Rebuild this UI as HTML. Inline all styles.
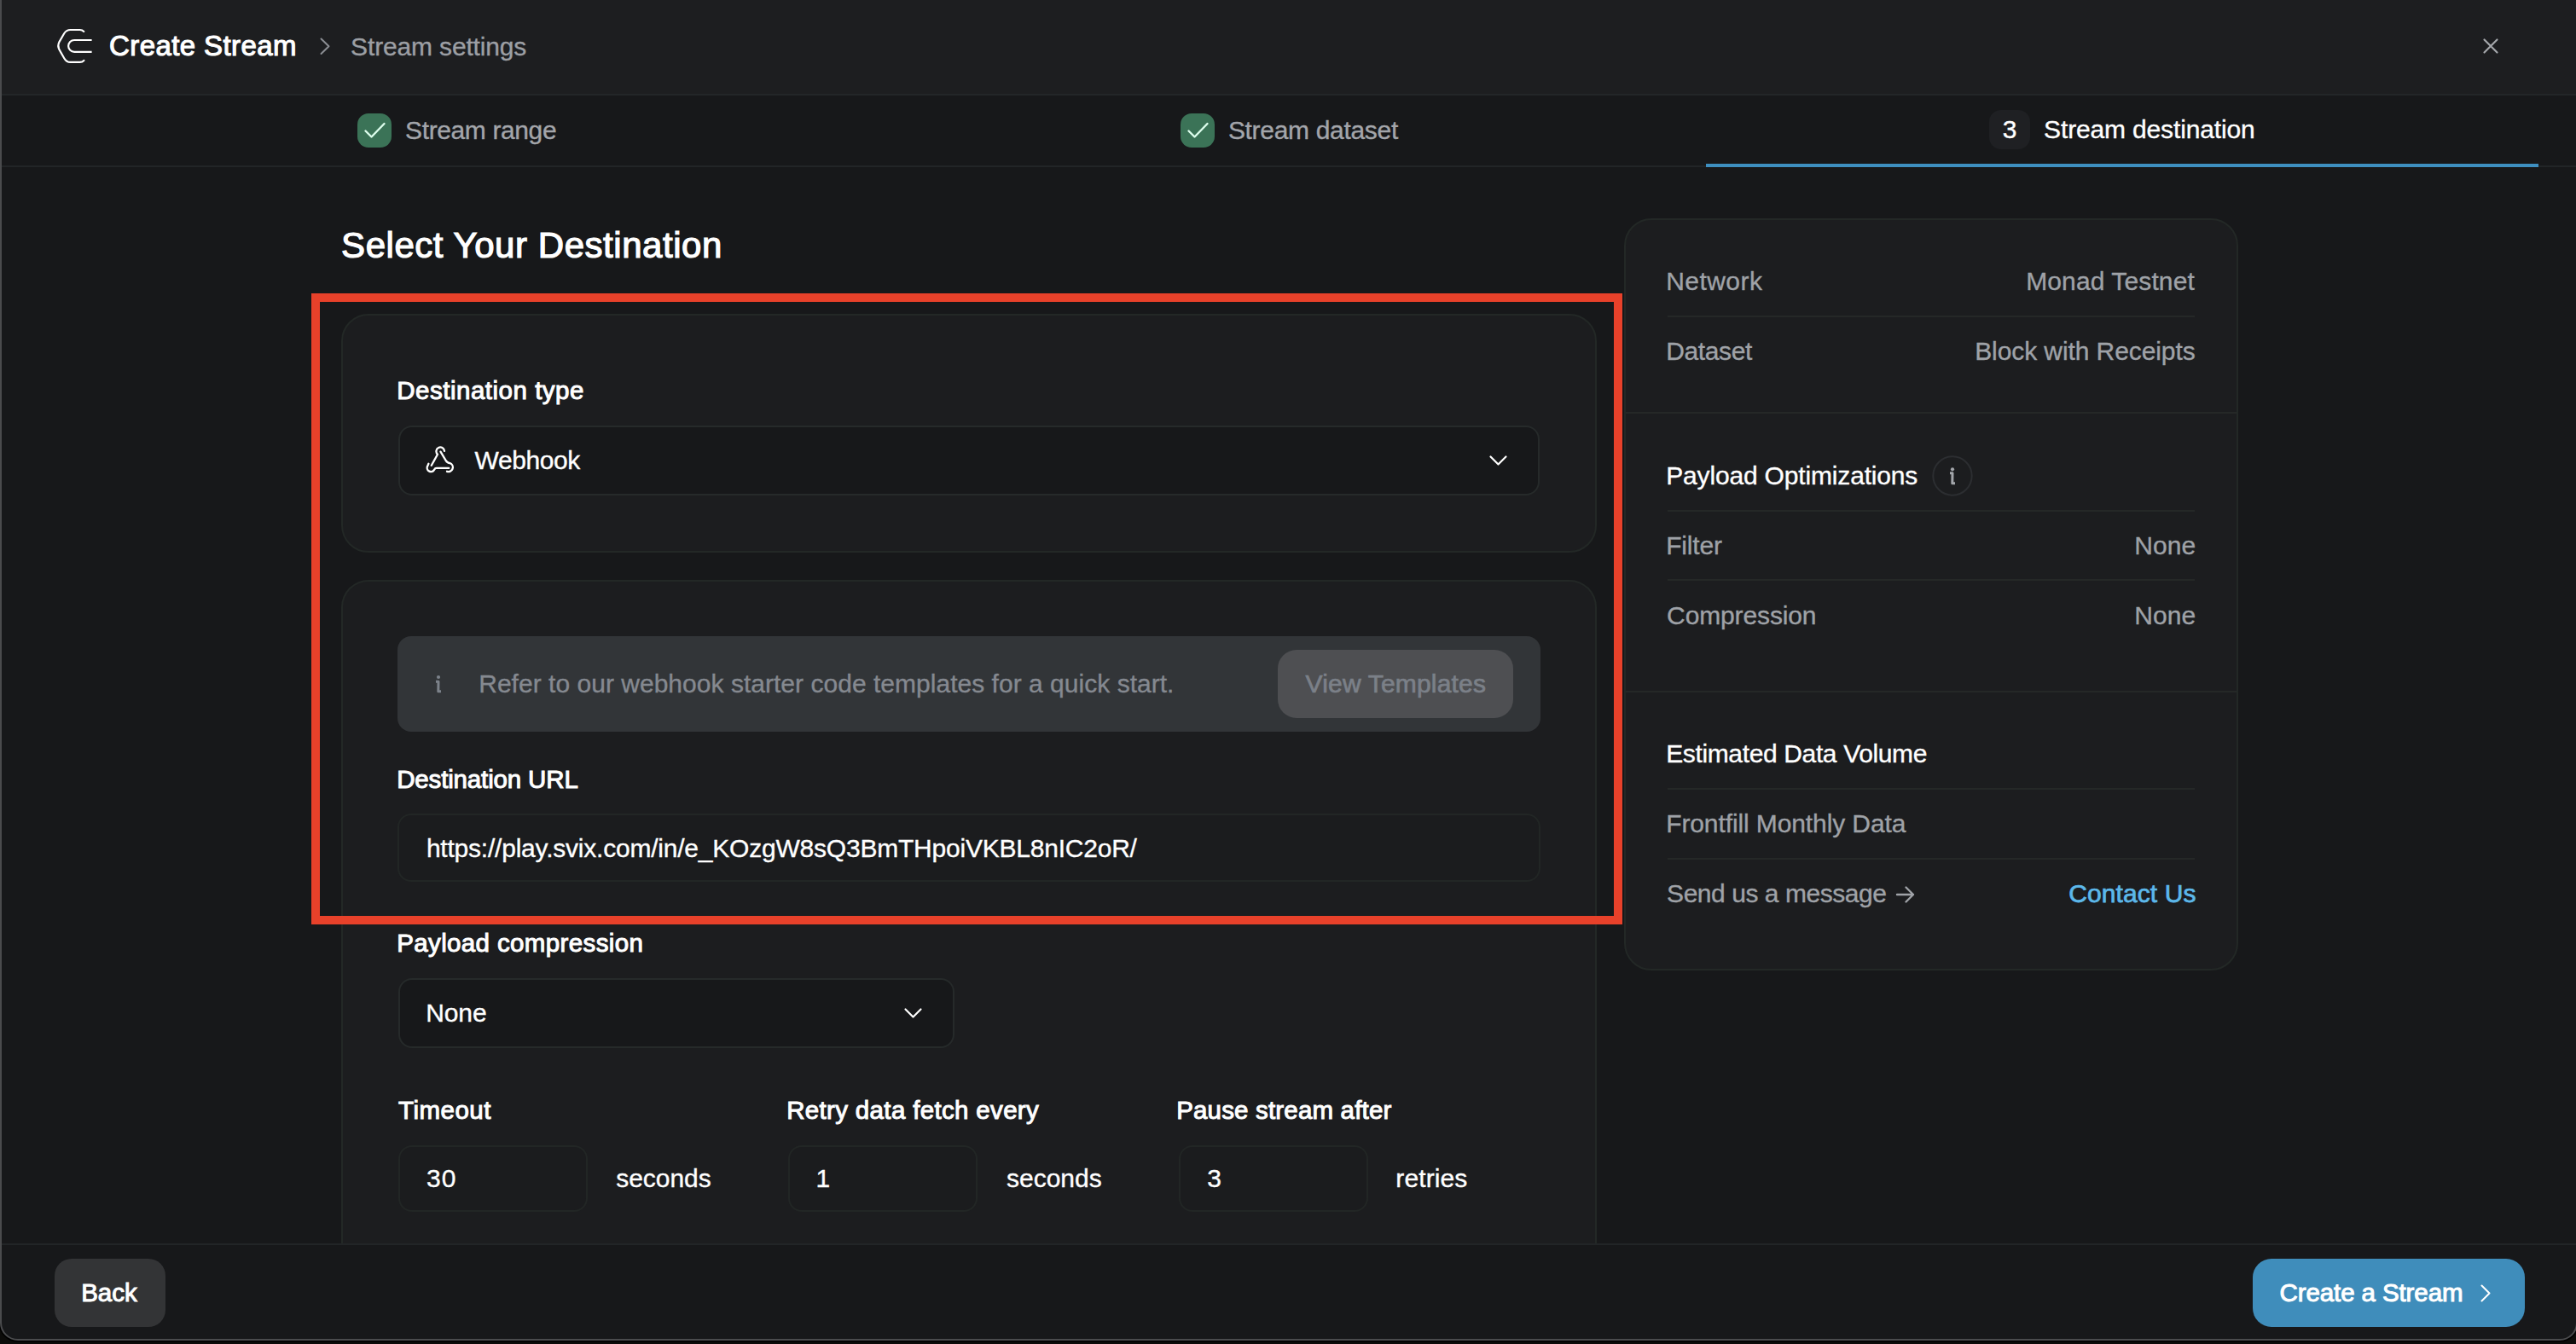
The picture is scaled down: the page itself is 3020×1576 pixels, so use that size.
<!DOCTYPE html>
<html><head><meta charset="utf-8">
<style>
html,body{margin:0;padding:0;width:3020px;height:1576px;overflow:hidden;background:#0c0c0a}
body{position:relative;font-family:"Liberation Sans",sans-serif}
.a{position:absolute;box-sizing:border-box}
.t{position:absolute;white-space:nowrap;line-height:1;font-family:"Liberation Sans",sans-serif}
</style></head><body>
<div class="a" style="left:0;top:-30px;width:3022px;height:1602px;border:2px solid #4a4b4d;border-radius:21px;background:#17181a;box-shadow:0 0 0 1.6px #000"></div>
<!-- header -->
<div class="a" style="left:2px;top:0;width:3018px;height:110px;background:#1d1e20"></div>
<div class="a" style="left:2px;top:110px;width:3018px;height:2px;background:#232628"></div>
<div class="a" style="left:2px;top:194px;width:3018px;height:2px;background:#222527"></div>
<div class="a" style="left:2000px;top:192px;width:976px;height:4px;background:#3e8fc0"></div>
<div class="a" style="left:2332px;top:129px;width:48px;height:46px;border-radius:14px;background:#1f2023"></div>
<!-- left cards -->
<div class="a" style="left:400px;top:368px;width:1472px;height:280px;border-radius:32px;background:#1c1d1f;border:2px solid #232826"></div>
<div class="a" style="left:400px;top:680px;width:1472px;height:778px;border-radius:32px 32px 0 0;background:#1c1d1f;border:2px solid #232826;border-bottom:none"></div>
<div class="a" style="left:467px;top:499px;width:1338px;height:82px;border-radius:16px;background:#17181a;border:2px solid #262a2a"></div>
<div class="a" style="left:466px;top:746px;width:1340px;height:112px;border-radius:16px;background:#323538"></div>
<div class="a" style="left:1498px;top:762px;width:276px;height:80px;border-radius:22px;background:#4e4f52"></div>
<div class="a" style="left:466px;top:954px;width:1340px;height:80px;border-radius:16px;background:#1b1c1e;border:2px solid #222625"></div>
<div class="a" style="left:467px;top:1147px;width:652px;height:82px;border-radius:16px;background:#17181a;border:2px solid #262a2a"></div>
<div class="a" style="left:467px;top:1343px;width:222px;height:78px;border-radius:16px;background:#1b1c1e;border:2px solid #222625"></div>
<div class="a" style="left:924px;top:1343px;width:222px;height:78px;border-radius:16px;background:#1b1c1e;border:2px solid #222625"></div>
<div class="a" style="left:1382px;top:1343px;width:222px;height:78px;border-radius:16px;background:#1b1c1e;border:2px solid #222625"></div>
<!-- footer -->
<div class="a" style="left:2px;top:1458px;width:3018px;height:2px;background:#222527"></div>
<div class="a" style="left:64px;top:1476px;width:130px;height:80px;border-radius:20px;background:#333436"></div>
<div class="a" style="left:2641px;top:1476px;width:319px;height:80px;border-radius:22px;background:#3f8dbb"></div>
<!-- right panel -->
<div class="a" style="left:1904px;top:256px;width:720px;height:882px;border-radius:32px;background:#1c1d1f;border:2px solid #232826"></div>
<div class="a" style="left:1955px;top:370px;width:618px;height:2px;background:#252827"></div>
<div class="a" style="left:1906px;top:483px;width:716px;height:2px;background:#252827"></div>
<div class="a" style="left:1955px;top:598px;width:618px;height:2px;background:#252827"></div>
<div class="a" style="left:1955px;top:679px;width:618px;height:2px;background:#252827"></div>
<div class="a" style="left:1906px;top:810px;width:716px;height:2px;background:#252827"></div>
<div class="a" style="left:1955px;top:924px;width:618px;height:2px;background:#252827"></div>
<div class="a" style="left:1955px;top:1006px;width:618px;height:2px;background:#252827"></div>
<!-- icons -->
<svg class="a" style="left:0;top:0" width="3020" height="1576" viewBox="0 0 3020 1576" fill="none" stroke-linecap="round" stroke-linejoin="round">
 <path d="M98.3 36.9 Q96.5 35 93.7 35 L82.5 35 Q77.8 35 75.2 39.2 L69.2 49.6 Q67.3 53.5 69.2 57.6 L75.2 68.2 Q77.8 72.9 82.5 72.9 L93.7 72.9 Q96.5 72.9 98.4 70.9" stroke="#fff" stroke-width="2.15"/>
 <path d="M107.6 47 L87.1 47 A6.95 6.95 0 0 0 87.1 60.9 L107.6 60.9" stroke="#fff" stroke-width="2.15" stroke-linecap="butt"/>
 <path d="M376.5 45.5 L385.5 54.3 L376.5 63" stroke="#8b8e93" stroke-width="2"/>
 <path d="M2912.5 46.5 L2927.5 61.5 M2927.5 46.5 L2912.5 61.5" stroke="#a4a7ab" stroke-width="2.2"/>
 <rect x="419" y="133" width="40" height="40" rx="13" fill="#3b7357"/>
 <path d="M428.5 153.5 L435.5 160.5 L450.5 145" stroke="#dcfdec" stroke-width="2.4"/>
 <rect x="1384" y="133" width="40" height="40" rx="13" fill="#3b7357"/>
 <path d="M1393.5 153.5 L1400.5 160.5 L1415.5 145" stroke="#dcfdec" stroke-width="2.4"/>
 <path d="M1747.5 535.5 L1756.5 544.5 L1765.5 535.5" stroke="#fff" stroke-width="2.2"/>
 <path d="M1061.5 1183.5 L1070.5 1192.5 L1079.5 1183.5" stroke="#fff" stroke-width="2.2"/>
 <path d="M2909.5 1507.5 L2918.5 1516.5 L2909.5 1525.5" stroke="#fff" stroke-width="2"/>
 <g stroke="#fff" stroke-width="2.3">
  <path d="M521 528.8 A4.8 4.8 0 1 0 513 532.8 L505.8 545.8"/>
  <path d="M516.5 529.6 L522.6 539.8 Q524.6 543 527.5 543.2 A4.9 4.9 0 1 1 524 552.8"/>
  <path d="M526.3 548.9 L511.5 548.9 Q510 548.9 509.3 550.6 A4.5 4.5 0 1 1 501.2 546.6 L502.4 543.8"/>
 </g>
 <circle cx="514" cy="794" r="2.1" fill="#7c828a"/>
 <path d="M511 799.3 L514 799.3 L513.8 810.8 L517 810.8" stroke="#7c828a" stroke-width="3" stroke-linecap="butt"/>
 <circle cx="2289" cy="558" r="22.7" stroke="#2c2e31" stroke-width="2"/>
 <circle cx="2289" cy="550.3" r="2.1" fill="#a3a6ab"/>
 <path d="M2286 554.8 L2289 554.8 L2288.8 566.8 L2292 566.8" stroke="#a3a6ab" stroke-width="3" stroke-linecap="butt"/>
 <path d="M2224 1049 L2243 1049 M2234.5 1040.5 L2243 1049 L2234.5 1057.5" stroke="#9fa2a7" stroke-width="2.4"/>
</svg>
<div class="t" style="left:128.1px;top:37.0px;font-size:33px;font-weight:400;letter-spacing:0.392px;color:#ffffff;-webkit-text-stroke:1.1px #ffffff">Create Stream</div>
<div class="t" style="left:411.1px;top:39.5px;font-size:30px;font-weight:400;letter-spacing:-0.154px;color:#9c9fa4;-webkit-text-stroke:0.35px #9c9fa4">Stream settings</div>
<div class="t" style="left:475.1px;top:137.5px;font-size:30px;font-weight:400;letter-spacing:-0.386px;color:#a3a5aa;-webkit-text-stroke:0.35px #a3a5aa">Stream range</div>
<div class="t" style="left:1439.9px;top:137.5px;font-size:30px;font-weight:400;letter-spacing:-0.315px;color:#a3a5aa;-webkit-text-stroke:0.35px #a3a5aa">Stream dataset</div>
<div class="t" style="left:2347.7px;top:136.5px;font-size:30px;font-weight:400;letter-spacing:0.0px;color:#ffffff;-webkit-text-stroke:0.35px #ffffff">3</div>
<div class="t" style="left:2396.1px;top:136.5px;font-size:30px;font-weight:400;letter-spacing:-0.154px;color:#ffffff;-webkit-text-stroke:0.35px #ffffff">Stream destination</div>
<div class="t" style="left:400.1px;top:266.7px;font-size:42px;font-weight:400;letter-spacing:0.541px;color:#ffffff;-webkit-text-stroke:1.2px #ffffff">Select Your Destination</div>
<div class="t" style="left:465.2px;top:442.7px;font-size:29.5px;font-weight:400;letter-spacing:0.513px;color:#ffffff;-webkit-text-stroke:1.0px #ffffff">Destination type</div>
<div class="t" style="left:556.6px;top:524.9px;font-size:30px;font-weight:400;letter-spacing:-0.403px;color:#ffffff;-webkit-text-stroke:0.35px #ffffff">Webhook</div>
<div class="t" style="left:561.2px;top:786.9px;font-size:30px;font-weight:400;letter-spacing:0.025px;color:#858990;-webkit-text-stroke:0.35px #858990">Refer to our webhook starter code templates for a quick start.</div>
<div class="t" style="left:1530.6px;top:786.9px;font-size:30px;font-weight:400;letter-spacing:0.178px;color:#7b8088;-webkit-text-stroke:0.7px #7b8088">View Templates</div>
<div class="t" style="left:465.2px;top:899.2px;font-size:29.5px;font-weight:400;letter-spacing:-0.157px;color:#ffffff;-webkit-text-stroke:1.0px #ffffff">Destination URL</div>
<div class="t" style="left:499.9px;top:979.7px;font-size:30px;font-weight:400;letter-spacing:-0.217px;color:#ffffff;-webkit-text-stroke:0.35px #ffffff">https://play.svix.com/in/e_KOzgW8sQ3BmTHpoiVKBL8nIC2oR/</div>
<div class="t" style="left:465.2px;top:1091.2px;font-size:29.5px;font-weight:400;letter-spacing:0.369px;color:#ffffff;-webkit-text-stroke:1.0px #ffffff">Payload compression</div>
<div class="t" style="left:499.2px;top:1172.9px;font-size:30px;font-weight:400;letter-spacing:-0.108px;color:#ffffff;-webkit-text-stroke:0.35px #ffffff">None</div>
<div class="t" style="left:467.0px;top:1287.4px;font-size:29.5px;font-weight:400;letter-spacing:0.5px;color:#ffffff;-webkit-text-stroke:1.0px #ffffff">Timeout</div>
<div class="t" style="left:500.1px;top:1366.5px;font-size:30px;font-weight:400;letter-spacing:0.9px;color:#ffffff;-webkit-text-stroke:0.35px #ffffff">30</div>
<div class="t" style="left:722.3px;top:1366.5px;font-size:30px;font-weight:400;letter-spacing:-0.06px;color:#ffffff;-webkit-text-stroke:0.35px #ffffff">seconds</div>
<div class="t" style="left:922.2px;top:1286.9px;font-size:29.5px;font-weight:400;letter-spacing:0.334px;color:#ffffff;-webkit-text-stroke:1.0px #ffffff">Retry data fetch every</div>
<div class="t" style="left:956.4px;top:1366.5px;font-size:30px;font-weight:400;letter-spacing:0.0px;color:#ffffff;-webkit-text-stroke:0.35px #ffffff">1</div>
<div class="t" style="left:1180.0px;top:1366.5px;font-size:30px;font-weight:400;letter-spacing:-0.017px;color:#ffffff;-webkit-text-stroke:0.35px #ffffff">seconds</div>
<div class="t" style="left:1379.2px;top:1286.9px;font-size:29.5px;font-weight:400;letter-spacing:0.171px;color:#ffffff;-webkit-text-stroke:1.0px #ffffff">Pause stream after</div>
<div class="t" style="left:1415.3px;top:1366.5px;font-size:30px;font-weight:400;letter-spacing:0.0px;color:#ffffff;-webkit-text-stroke:0.35px #ffffff">3</div>
<div class="t" style="left:1636.3px;top:1366.5px;font-size:30px;font-weight:400;letter-spacing:0.115px;color:#ffffff;-webkit-text-stroke:0.35px #ffffff">retries</div>
<div class="t" style="left:95.2px;top:1501.3px;font-size:29.5px;font-weight:400;letter-spacing:0.003px;color:#ffffff;-webkit-text-stroke:1.0px #ffffff">Back</div>
<div class="t" style="left:2672.5px;top:1500.9px;font-size:29.5px;font-weight:400;letter-spacing:-0.101px;color:#ffffff;-webkit-text-stroke:1.0px #ffffff">Create a Stream</div>
<div class="t" style="left:1953.2px;top:314.5px;font-size:30px;font-weight:400;letter-spacing:0.45px;color:#9fa2a7;-webkit-text-stroke:0.35px #9fa2a7">Network</div>
<div class="t" style="left:2375.2px;top:314.5px;font-size:30px;font-weight:400;letter-spacing:0.111px;color:#9fa2a7;-webkit-text-stroke:0.35px #9fa2a7">Monad Testnet</div>
<div class="t" style="left:1953.2px;top:396.8px;font-size:30px;font-weight:400;letter-spacing:-0.367px;color:#9fa2a7;-webkit-text-stroke:0.35px #9fa2a7">Dataset</div>
<div class="t" style="left:2315.2px;top:396.8px;font-size:30px;font-weight:400;letter-spacing:-0.09px;color:#9fa2a7;-webkit-text-stroke:0.35px #9fa2a7">Block with Receipts</div>
<div class="t" style="left:1953.2px;top:542.5px;font-size:30px;font-weight:400;letter-spacing:-0.165px;color:#ffffff;-webkit-text-stroke:0.35px #ffffff">Payload Optimizations</div>
<div class="t" style="left:1953.2px;top:625.3px;font-size:30px;font-weight:400;letter-spacing:-0.156px;color:#9fa2a7;-webkit-text-stroke:0.35px #9fa2a7">Filter</div>
<div class="t" style="left:2502.2px;top:625.3px;font-size:30px;font-weight:400;letter-spacing:0.102px;color:#9fa2a7;-webkit-text-stroke:0.35px #9fa2a7">None</div>
<div class="t" style="left:1954.1px;top:707.0px;font-size:30px;font-weight:400;letter-spacing:-0.13px;color:#9fa2a7;-webkit-text-stroke:0.35px #9fa2a7">Compression</div>
<div class="t" style="left:2502.2px;top:707.0px;font-size:30px;font-weight:400;letter-spacing:0.102px;color:#9fa2a7;-webkit-text-stroke:0.35px #9fa2a7">None</div>
<div class="t" style="left:1953.2px;top:869.1px;font-size:30px;font-weight:400;letter-spacing:-0.365px;color:#ffffff;-webkit-text-stroke:0.35px #ffffff">Estimated Data Volume</div>
<div class="t" style="left:1953.2px;top:950.5px;font-size:30px;font-weight:400;letter-spacing:-0.105px;color:#9fa2a7;-webkit-text-stroke:0.35px #9fa2a7">Frontfill Monthly Data</div>
<div class="t" style="left:1954.1px;top:1032.8px;font-size:30px;font-weight:400;letter-spacing:-0.46px;color:#9fa2a7;-webkit-text-stroke:0.35px #9fa2a7">Send us a message</div>
<div class="t" style="left:2425.3px;top:1032.8px;font-size:30px;font-weight:400;letter-spacing:0.079px;color:#5cb8ea;-webkit-text-stroke:0.75px #5cb8ea">Contact Us</div>
<div class="a" style="left:365px;top:344px;width:1537px;height:740px;border:10px solid #e8412a"></div>
</body></html>
